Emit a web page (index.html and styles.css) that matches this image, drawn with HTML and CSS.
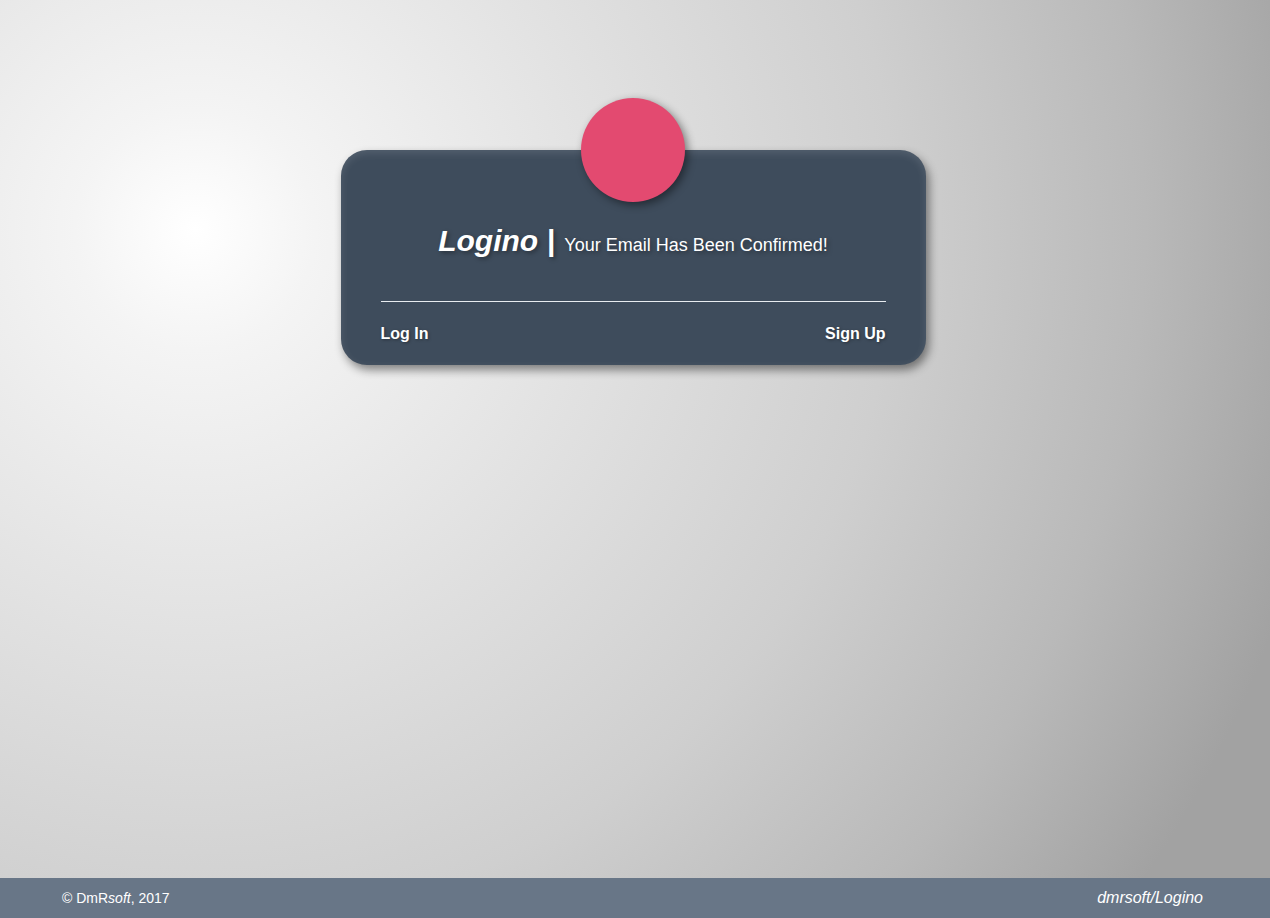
FILE: index.html
```html
<!DOCTYPE html>
<html>
<head>
<meta charset="utf-8">
<title>Logino</title>
<link rel="stylesheet" href="styles.css">
</head>
<body>
<main class="page">
  <section class="card">
    <div class="avatar"></div>
    <h1 class="title"><span class="brand">Logino</span> <span class="sep">|</span> <span class="msg">Your Email Has Been Confirmed!</span></h1>
    <hr class="rule">
    <nav class="links">
      <a href="#" class="link">Log In</a>
      <a href="#" class="link">Sign Up</a>
    </nav>
  </section>
</main>
<footer class="footer">
  <span class="copy">© DmR<i>soft</i>, 2017</span>
  <span class="repo">dmrsoft/Logino</span>
</footer>
</body>
</html>
```
FILE: styles.css
```css
html, body {
  margin: 0;
  padding: 0;
  height: 100%;
}
body {
  font-family: "Liberation Sans", Arial, sans-serif;
  background: radial-gradient(circle at 195px 230px, #ffffff 0px, #f4f4f4 120px, #e2e2e2 400px, #cfcfcf 700px, #b9b9b9 950px, #a2a2a2 1150px);
  display: flex;
  flex-direction: column;
  overflow: hidden;
}
.page {
  flex: 1;
  display: flex;
  justify-content: center;
  align-items: flex-start;
  padding-top: 150px;
  padding-right: 4px;
}
.card {
  position: relative;
  width: 585px;
  height: 215px;
  box-sizing: border-box;
  border-radius: 26px;
  background: #3e4c5c;
  box-shadow: inset 0 3px 8px rgba(255,255,255,0.12), 3px 5px 10px rgba(0,0,0,0.45);
  padding: 72px 40px 0;
  display: flex;
  flex-direction: column;
}
.avatar {
  position: absolute;
  left: 240px;
  top: -52px;
  width: 104px;
  height: 104px;
  border-radius: 50%;
  background: #e34a70;
  box-shadow: 3px 3px 8px rgba(0,0,0,0.45);
}
.title {
  margin: 0;
  text-align: center;
  color: #fff;
  font-weight: normal;
  line-height: 36px;
  text-shadow: 2px 2px 4px rgba(0,0,0,0.35);
  white-space: nowrap;
}
.brand {
  font-size: 30px;
  font-weight: bold;
  font-style: italic;
}
.sep {
  font-size: 30px;
  font-weight: bold;
}
.msg {
  font-size: 18px;
}
.rule {
  margin: 38px 0 0;
  border: 0;
  height: 1px;
  background: #e8ecf0;
}
.links {
  display: flex;
  justify-content: space-between;
  margin-top: 23px;
}
.link {
  color: #fff;
  font-weight: bold;
  font-size: 16px;
  text-decoration: none;
  text-shadow: 1px 1px 3px rgba(0,0,0,0.35);
}
.footer {
  height: 40px;
  background: #687687;
  color: #fff;
  display: flex;
  align-items: center;
  justify-content: space-between;
  padding: 0 67px 0 62px;
  flex-shrink: 0;
}
.copy {
  font-size: 14px;
}
.repo {
  font-size: 16px;
  font-style: italic;
}
```
